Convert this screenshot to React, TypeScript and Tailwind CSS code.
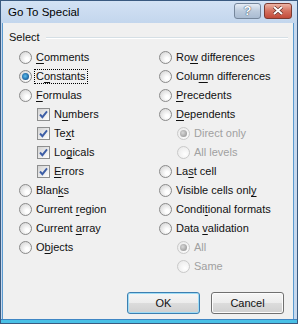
import React from "react";

type Opt = {
  pre: string;
  key: string;
  post: string;
  kind: "radio" | "check";
  checked?: boolean;
  disabled?: boolean;
  indent?: boolean;
  focus?: boolean;
};

function Radio({ checked, disabled }: { checked?: boolean; disabled?: boolean }) {
  return (
    <span
      className={`flex items-center justify-center w-[13px] h-[13px] rounded-full border shrink-0 ${
        disabled
          ? "border-[#c9c9c9] bg-[radial-gradient(circle_at_65%_65%,#ffffff,#e6e6e6)]"
          : "border-[#8a8a8a] bg-[radial-gradient(circle_at_65%_65%,#ffffff_15%,#cdcdcd)]"
      }`}
    >
      {checked && (
        <span
          className={`w-[7px] h-[7px] rounded-full ${
            disabled
              ? "bg-[radial-gradient(circle_at_40%_40%,#d8d8d8,#8a8a8a)]"
              : "bg-[radial-gradient(circle_at_45%_45%,#5cc0f2,#1a5d99_70%,#0e3f6e)]"
          }`}
        />
      )}
    </span>
  );
}

function Check() {
  return (
    <span className="flex items-center justify-center w-[13px] h-[13px] border border-[#8e8f8f] bg-[linear-gradient(135deg,#d3d3d3,#ffffff)] shrink-0">
      <svg width="11" height="11" viewBox="0 0 11 11">
        <path d="M2 5.5 L4.4 8.2 L9 2.4" fill="none" stroke="#3d5ea6" strokeWidth="1.9" />
      </svg>
    </span>
  );
}

function Row({ o }: { o: Opt }) {
  const label = (
    <span>
      {o.pre}
      {o.disabled ? o.key : <span className="underline underline-offset-[2px]">{o.key}</span>}
      {o.post}
    </span>
  );
  return (
    <div className={`flex items-center h-[19px] ${o.indent ? "pl-[18px]" : ""}`}>
      {o.kind === "radio" ? <Radio checked={o.checked} disabled={o.disabled} /> : <Check />}
      <span
        className={`ml-[3px] px-[1px] ${o.disabled ? "text-[#a0a0a0]" : "text-[#111]"} ${
          o.focus ? "outline outline-1 outline-dotted outline-black" : ""
        }`}
      >
        {label}
      </span>
    </div>
  );
}

const left: Opt[] = [
  { pre: "", key: "C", post: "omments", kind: "radio" },
  { pre: "C", key: "o", post: "nstants", kind: "radio", checked: true, focus: true },
  { pre: "", key: "F", post: "ormulas", kind: "radio" },
  { pre: "N", key: "u", post: "mbers", kind: "check", indent: true },
  { pre: "Te", key: "x", post: "t", kind: "check", indent: true },
  { pre: "Lo", key: "g", post: "icals", kind: "check", indent: true },
  { pre: "", key: "E", post: "rrors", kind: "check", indent: true },
  { pre: "Blan", key: "k", post: "s", kind: "radio" },
  { pre: "Current ", key: "r", post: "egion", kind: "radio" },
  { pre: "Current ", key: "a", post: "rray", kind: "radio" },
  { pre: "O", key: "b", post: "jects", kind: "radio" },
];

const right: Opt[] = [
  { pre: "Ro", key: "w", post: " differences", kind: "radio" },
  { pre: "Colu", key: "m", post: "n differences", kind: "radio" },
  { pre: "", key: "P", post: "recedents", kind: "radio" },
  { pre: "", key: "D", post: "ependents", kind: "radio" },
  { pre: "", key: "D", post: "irect only", kind: "radio", indent: true, disabled: true, checked: true },
  { pre: "", key: "A", post: "ll levels", kind: "radio", indent: true, disabled: true },
  { pre: "La", key: "s", post: "t cell", kind: "radio" },
  { pre: "Visible cells onl", key: "y", post: "", kind: "radio" },
  { pre: "Condi", key: "t", post: "ional formats", kind: "radio" },
  { pre: "Data ", key: "v", post: "alidation", kind: "radio" },
  { pre: "", key: "A", post: "ll", kind: "radio", indent: true, disabled: true, checked: true },
  { pre: "", key: "S", post: "ame", kind: "radio", indent: true, disabled: true },
];

export default function App() {
  return (
    <div
      className="w-[298px] h-[324px] flex flex-col bg-[#c6d8ee] border border-[#3a5a80] text-[11px] leading-[13px]"
      style={{ fontFamily: '"Liberation Sans", Arial, sans-serif' }}
    >
      {/* title bar */}
      <div className="h-[22px] flex items-center pl-[7px] pr-[5px] bg-[linear-gradient(#d3e2f4,#c3d6ed)]">
        <span className="text-black text-[11.5px]">Go To Special</span>
        <div className="ml-auto flex gap-[3px] pb-[3px]">
          <div className="w-[27px] h-[16px] rounded-[3px] border border-[#76879c] bg-[linear-gradient(#e6edf6,#bccbdd_50%,#aabcd2)] flex items-center justify-center">
            <span className="text-[13px] font-bold text-white leading-none [text-shadow:0_0_1px_#33475f,0_0_1px_#33475f]">?</span>
          </div>
          <div className="w-[28px] h-[16px] rounded-[3px] border border-[#7b3b32] bg-[linear-gradient(#edb4a4,#d4715f_50%,#c24b3a)] flex items-center justify-center">
            <svg width="12" height="9" viewBox="0 0 12 9">
              <path d="M2 1 L10 8 M10 1 L2 8" stroke="#5a2a22" strokeWidth="3.2" />
              <path d="M2 1 L10 8 M10 1 L2 8" stroke="#ffffff" strokeWidth="2" />
            </svg>
          </div>
        </div>
      </div>
      {/* body */}
      <div className="flex-1 flex flex-col ml-[1px] mr-[3px] bg-[#f0f0f0] border-x border-[#5b9bd0] pt-[8px] pl-[6px] pr-[5px]">
        <div className="h-[13px] flex items-center">
          <span className="text-[#111]">Select</span>
          <div className="flex-1 ml-[6px] border-t border-[#d5dfe5] border-b border-b-white h-[2px]" />
        </div>
        <div className="mt-[4px] pl-[10px] grid grid-cols-[140px_1fr]">
          <div className="flex flex-col">
            {left.map((o, i) => (
              <Row key={i} o={o} />
            ))}
          </div>
          <div className="flex flex-col">
            {right.map((o, i) => (
              <Row key={i} o={o} />
            ))}
          </div>
        </div>
        <div className="mt-[16px] flex justify-end gap-[11px] pr-[4px] text-[#111]">
          <div className="w-[73px] h-[22px] rounded-[3px] border border-[#3c7fb1] bg-[linear-gradient(#f6f6f6,#ececec_50%,#dcdcdc_51%,#d0d0d0)] flex items-center justify-center shadow-[inset_0_0_0_1px_#9fdcf5]">
            OK
          </div>
          <div className="w-[73px] h-[22px] rounded-[3px] border border-[#707070] bg-[linear-gradient(#f6f6f6,#ececec_50%,#dcdcdc_51%,#d0d0d0)] flex items-center justify-center shadow-[inset_0_0_0_1px_#fcfcfc]">
            Cancel
          </div>
        </div>
      </div>
      <div className="h-[4px] bg-[#49c0e6] border-t border-[#3f86c4]" />
    </div>
  );
}
